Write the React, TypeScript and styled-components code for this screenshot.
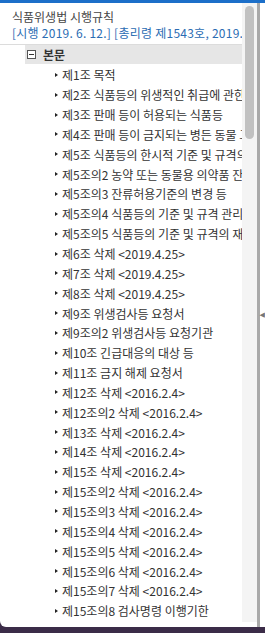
import React from "react";
import styled, { createGlobalStyle } from "styled-components";

const GlobalStyle = createGlobalStyle`
  html, body {
    margin: 0;
    padding: 0;
    background: #3b2c48;
  }
  body {
    font-family: "Noto Sans CJK KR", "Noto Sans", sans-serif;
  }
`;

const Frame = styled.div`
  display: flex;
  width: 265px;
  height: 627px;
  box-sizing: border-box;
  background: #fff;
  border-top: 3px solid #1c6fc9;
  border-bottom-left-radius: 6px;
  overflow: hidden;
`;

const Content = styled.div`
  display: flex;
  flex-direction: column;
  width: 242px;
  overflow: hidden;
`;

const Header = styled.div`
  padding: 6px 0 3px 12px;
  border-bottom: 1px solid #dcdcdc;
  white-space: nowrap;
  font-size: 12px;
  line-height: 16px;
`;

const Title = styled.div`
  color: #454545;
`;

const Meta = styled.div`
  color: #2b6cb3;
  letter-spacing: 0.25px;
`;

const RootRow = styled.div`
  display: flex;
  align-items: center;
  gap: 7px;
  height: 19px;
  margin-left: 25px;
  padding-left: 2px;
  background: #e6e6e6;
  font-size: 12px;
  font-weight: 700;
  color: #333;
`;

const Toggle = styled.span`
  position: relative;
  width: 7px;
  height: 7px;
  border: 1px solid #555;
  background: #fff;

  &::after {
    content: "";
    position: absolute;
    left: 1px;
    right: 1px;
    top: 3px;
    height: 1px;
    background: #333;
  }
`;

const List = styled.ul`
  margin: 0;
  padding: 1px 0 0 55px;
  list-style: none;
`;

const Item = styled.li`
  display: flex;
  align-items: center;
  gap: 4px;
  height: 19.85px;
  white-space: nowrap;
  font-size: 12px;
  color: #333;
`;

const Arrow = styled.span`
  flex: none;
  width: 0;
  height: 0;
  border-top: 2.5px solid transparent;
  border-bottom: 2.5px solid transparent;
  border-left: 3px solid #222;
`;

const Track = styled.div`
  flex: none;
  width: 15px;
  margin-bottom: 5px;
  padding-top: 3px;
  box-sizing: border-box;
  background: #f4f4f4;
`;

const Thumb = styled.div`
  width: 9px;
  height: 133px;
  margin: 0 auto;
  border-radius: 5px;
  background: #c1c1c1;
`;

const Splitter = styled.div`
  flex: none;
  width: 3px;
  background: #a9a9a9;
`;

const Handle = styled.div`
  flex: 1;
  display: flex;
  align-items: center;
  justify-content: center;
  color: #777;
  font-size: 7px;
  font-family: "DejaVu Sans", sans-serif;
`;

const items = [
  "제1조 목적",
  "제2조 식품등의 위생적인 취급에 관한 기준",
  "제3조 판매 등이 허용되는 식품등",
  "제4조 판매 등이 금지되는 병든 동물 고기 등",
  "제5조 식품등의 한시적 기준 및 규격의 인정 등",
  "제5조의2 농약 또는 동물용 의약품 잔류허용기준",
  "제5조의3 잔류허용기준의 변경 등",
  "제5조의4 식품등의 기준 및 규격 관리계획 등",
  "제5조의5 식품등의 기준 및 규격의 재평가 등",
  "제6조 삭제 <2019.4.25>",
  "제7조 삭제 <2019.4.25>",
  "제8조 삭제 <2019.4.25>",
  "제9조 위생검사등 요청서",
  "제9조의2 위생검사등 요청기관",
  "제10조 긴급대응의 대상 등",
  "제11조 금지 해제 요청서",
  "제12조 삭제 <2016.2.4>",
  "제12조의2 삭제 <2016.2.4>",
  "제13조 삭제 <2016.2.4>",
  "제14조 삭제 <2016.2.4>",
  "제15조 삭제 <2016.2.4>",
  "제15조의2 삭제 <2016.2.4>",
  "제15조의3 삭제 <2016.2.4>",
  "제15조의4 삭제 <2016.2.4>",
  "제15조의5 삭제 <2016.2.4>",
  "제15조의6 삭제 <2016.2.4>",
  "제15조의7 삭제 <2016.2.4>",
  "제15조의8 검사명령 이행기한",
];

export default function App() {
  return (
    <>
      <GlobalStyle />
      <Frame>
        <Content>
          <Header>
            <Title>식품위생법 시행규칙</Title>
            <Meta>[시행 2019. 6. 12.] [총리령 제1543호, 2019. 6. 12., 일부개정]</Meta>
          </Header>
          <RootRow>
            <Toggle />
            본문
          </RootRow>
          <List>
            {items.map((label) => (
              <Item key={label}>
                <Arrow />
                {label}
              </Item>
            ))}
          </List>
        </Content>
        <Track>
          <Thumb />
        </Track>
        <Splitter />
        <Handle>◀</Handle>
      </Frame>
    </>
  );
}
